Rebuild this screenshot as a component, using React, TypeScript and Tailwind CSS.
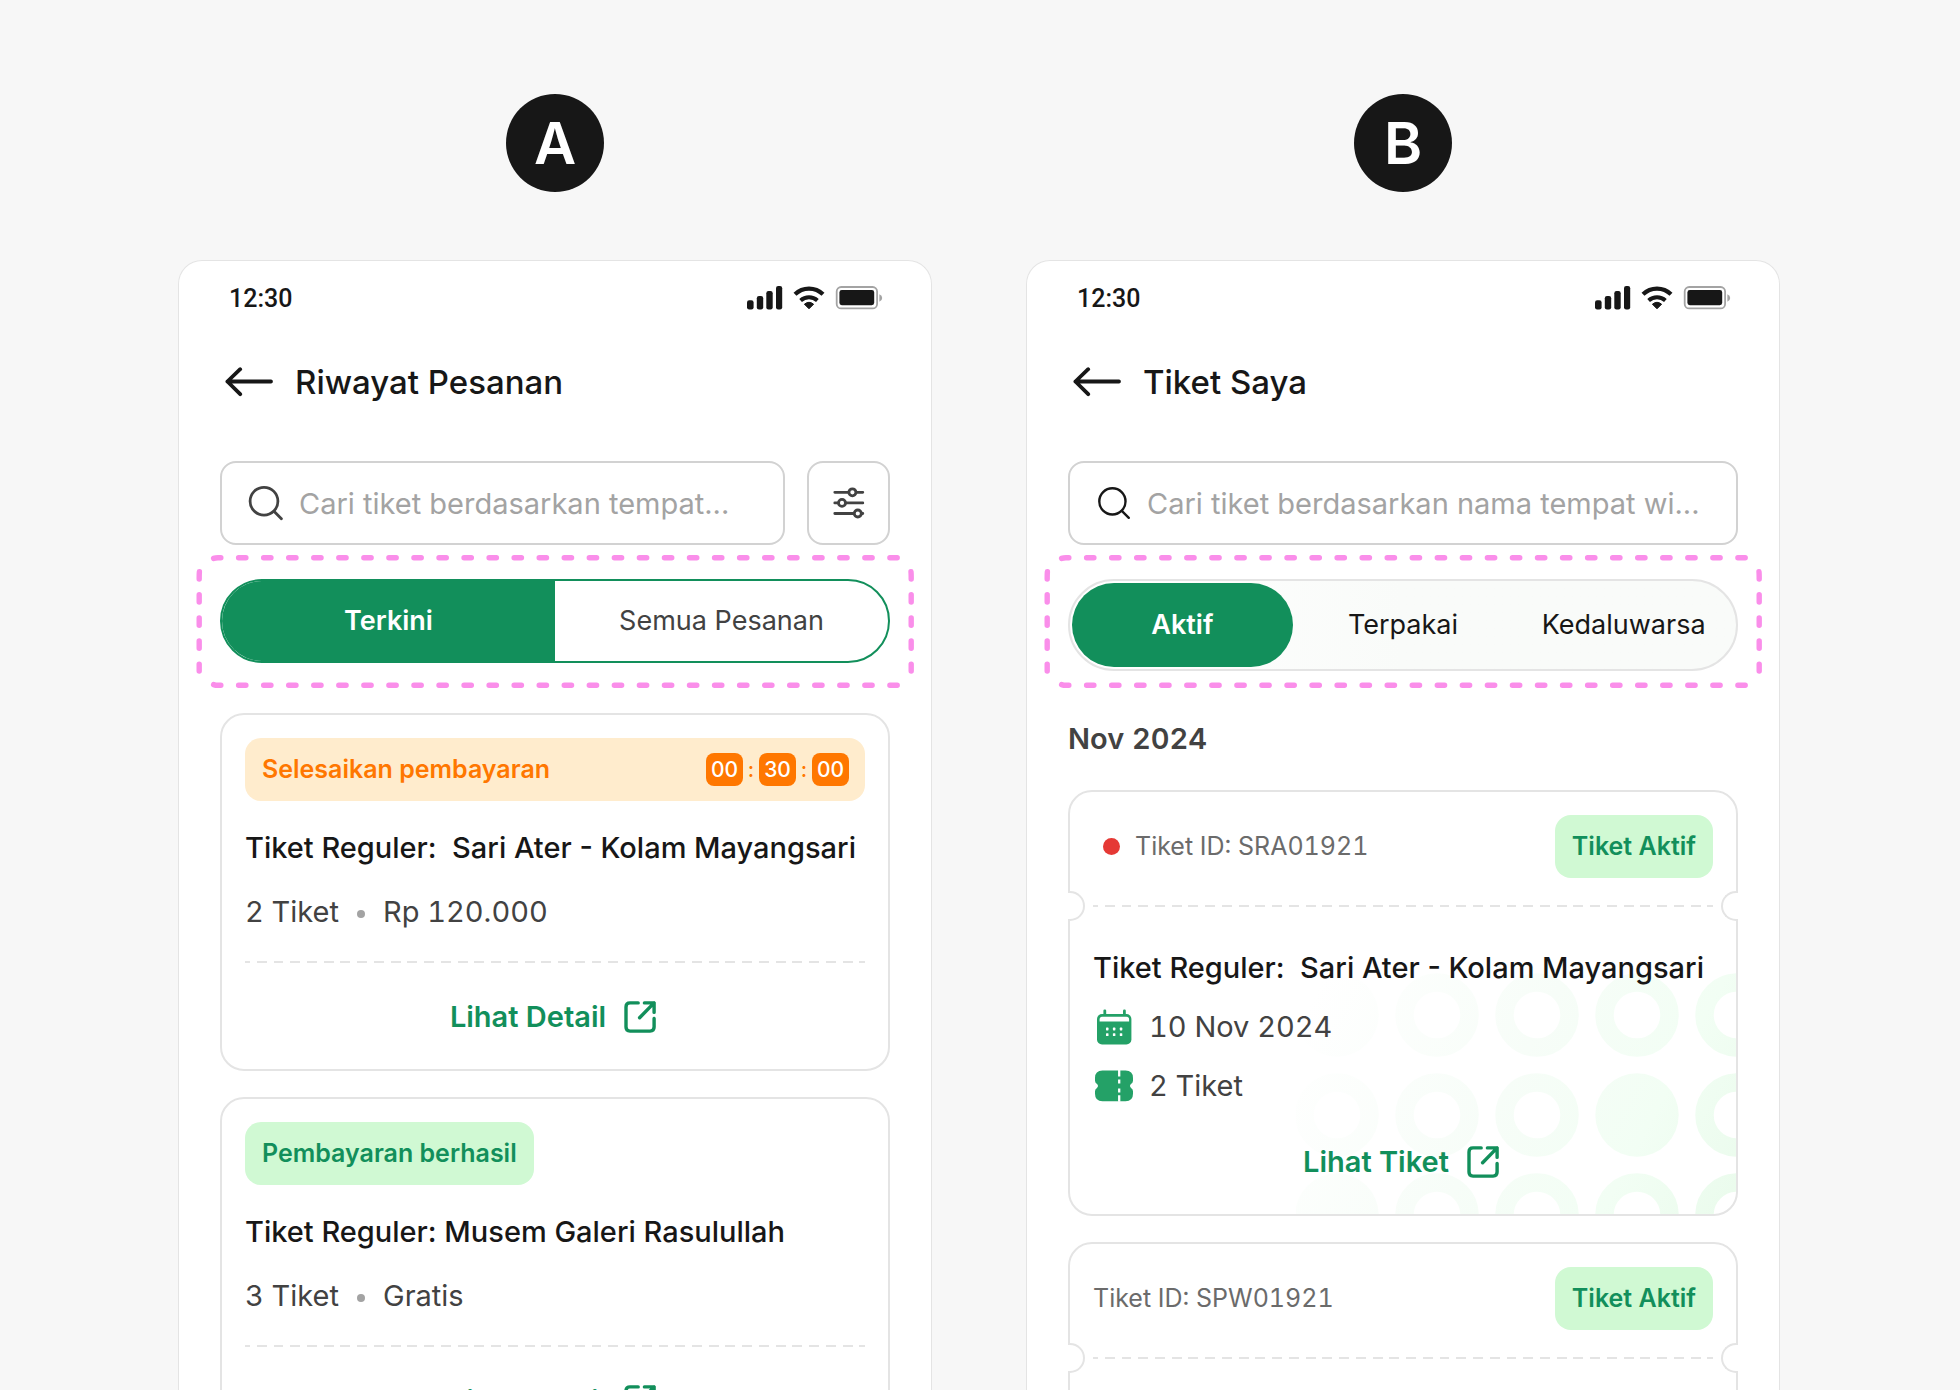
import type { ReactNode } from "react";

function StatusIcons() {
  return (
    <svg viewBox="0 0 136 24" className="h-6 w-[136px] text-[#171717]" fill="currentColor" aria-hidden="true">
      <rect x="0" y="14.2" width="6.6" height="9.3" rx="2.2" />
      <rect x="9.8" y="10" width="6.4" height="13.5" rx="2.2" />
      <rect x="19.3" y="5" width="6.4" height="18.5" rx="2.2" />
      <rect x="29" y="0" width="6.2" height="23.5" rx="2.2" />
      <g fill="none" stroke="currentColor">
        <path d="M48 8.3a20 20 0 0 1 28 0" strokeWidth="4.2" />
        <path d="M53.6 14.4a12.6 12.6 0 0 1 16.8 0" strokeWidth="4" />
      </g>
      <path d="M57.4 18.2q4.6-3.8 9.2 0L62 22.8z" stroke="currentColor" strokeWidth="1" strokeLinejoin="round" />
      <rect x="89.7" y="1" width="40.4" height="21.4" rx="4.5" fill="none" stroke="#a3a3a3" strokeWidth="1.8" />
      <rect x="92.4" y="4" width="34.8" height="15.2" rx="2.4" />
      <path d="M132.4 8.3q2.8 1 2.8 3.7t-2.8 3.7z" fill="#a3a3a3" />
    </svg>
  );
}

function BackArrow() {
  return (
    <svg viewBox="0 0 48 30" className="h-[30px] w-12" fill="none" stroke="#171717" strokeWidth="3.8" strokeLinecap="round" strokeLinejoin="round" aria-hidden="true">
      <path d="M46 14.5H2.4M15.2 2.2L2.4 14.5 15.2 27.2" />
    </svg>
  );
}

function SearchIconBold() {
  return (
    <svg viewBox="0 0 36 36" className="size-9 shrink-0" fill="none" stroke="#424242" strokeWidth="2.8" strokeLinecap="round" aria-hidden="true">
      <circle cx="17" cy="16.2" r="13.9" />
      <path d="M27.2 26.4l7.2 7.4" />
    </svg>
  );
}

function SearchIconLight() {
  return (
    <svg viewBox="0 0 36 36" className="size-9 shrink-0" fill="none" stroke="#171717" strokeWidth="2.4" strokeLinecap="round" aria-hidden="true">
      <circle cx="17.4" cy="16.4" r="13.1" />
      <path d="M26.8 25.8l7 7" />
    </svg>
  );
}

function FilterIcon() {
  return (
    <svg viewBox="0 0 32 32" className="size-8" fill="none" stroke="#424242" strokeWidth="2.8" strokeLinecap="round" aria-hidden="true">
      <path d="M1.8 5.3h28M1.8 15.9h28M1.8 26.5h28" />
      <g fill="white">
        <circle cx="19.4" cy="5.3" r="3.5" />
        <circle cx="9" cy="15.9" r="3.5" />
        <circle cx="24.8" cy="26.5" r="3.5" />
      </g>
    </svg>
  );
}

function OpenIcon() {
  return (
    <svg viewBox="0 0 32 32" className="size-8" fill="none" stroke="currentColor" strokeWidth="3.4" strokeLinecap="round" strokeLinejoin="round" aria-hidden="true">
      <path d="M14.2 1.9H6q-4 0-4 4v20.2q0 4 4 4h20.1q4 0 4-4v-8.6" />
      <path d="M20.4 1.9h9.7v9.5M30.1 1.9L15.6 16.8" />
    </svg>
  );
}

function CalendarIcon() {
  return (
    <svg viewBox="0 0 40 36" className="h-9 w-10 shrink-0" aria-hidden="true">
      <g fill="#24a167">
        <rect x="3" y="5" width="34.4" height="30.4" rx="5" />
        <rect x="9.4" y="0.5" width="2.8" height="6" rx="1.2" />
        <rect x="29" y="0.5" width="2.8" height="6" rx="1.2" />
      </g>
      <path d="M5.6 12.4v-2q0-2.7 2.7-2.7h24.1q2.7 0 2.7 2.7v2z" fill="white" />
      <g fill="white">
        <rect x="12" y="18.6" width="2.5" height="2.8" rx="0.6" />
        <rect x="18.9" y="18.6" width="2.5" height="2.8" rx="0.6" />
        <rect x="25.8" y="18.6" width="2.5" height="2.8" rx="0.6" />
        <rect x="12" y="24.2" width="2.5" height="2.8" rx="0.6" />
        <rect x="18.9" y="24.2" width="2.5" height="2.8" rx="0.6" />
        <rect x="25.8" y="24.2" width="2.5" height="2.8" rx="0.6" />
      </g>
    </svg>
  );
}

function TicketIcon() {
  return (
    <svg viewBox="0 0 40 36" className="h-9 w-10 shrink-0" aria-hidden="true">
      <path
        d="M8.5 2.5h23q7.5 0 7.5 7.5v2.6q0 2.2-1.7 3.2-2.6 2.2 0 4.4 1.7 1 1.7 3.2v2.4q0 7.5-7.5 7.5h-23q-7.5 0-7.5-7.5v-2.4q0-2.2 1.7-3.2 2.6-2.2 0-4.4Q1 14.8 1 12.6V10q0-7.5 7.5-7.5z"
        fill="#24a167"
      />
      <path d="M25.2 2v6.6M25.2 11.4v4M25.2 20.4v4M25.2 27.2v6.6" stroke="white" strokeWidth="2.3" />
    </svg>
  );
}

/** Dashed outline that calls attention to the tab control. */
function Highlight() {
  return (
    <svg
      viewBox="0 0 718 133"
      className="pointer-events-none absolute -inset-x-6 -top-6 w-[calc(100%+48px)]"
      fill="none"
      stroke="#fa8eea"
      strokeWidth="5.4"
      strokeLinecap="round"
      aria-hidden="true"
    >
      <g strokeDasharray="7.3 17.75">
        <path d="M17.6 3.4Q19.5 2.7 22 2.7H703" />
        <path d="M17.6 129.6Q19.5 130.3 22 130.3H703" />
      </g>
      <g strokeDasharray="7.3 15.8">
        <path d="M3.4 16.7Q3.2 19 3.2 22V116" />
        <path d="M715 16.7Q715.2 19 715.2 22V116" />
      </g>
    </svg>
  );
}

function DashedRule() {
  return (
    <div className="h-0.5 bg-[repeating-linear-gradient(90deg,#e4e4e4_0%_0.8%,transparent_0.8%_1.9%,#e4e4e4_1.9%_2.7%)]" />
  );
}

function RingPattern() {
  const rows = [43, 143, 243];
  const columns = [41, 141, 241, 341, 441];
  const solid = new Set(["0-0", "2-0", "1-3"]);
  return (
    <svg viewBox="0 0 440 242" className="absolute right-0 bottom-0 h-[242px] w-[440px]" aria-hidden="true">
      <defs>
        <linearGradient id="ring-fade" gradientUnits="userSpaceOnUse" x1="20" y1="20" x2="440" y2="240">
          <stop offset="0" stopColor="#ffffff" />
          <stop offset="0.45" stopColor="#f7fdf8" />
          <stop offset="0.75" stopColor="#f2fef4" />
          <stop offset="1" stopColor="#eafbec" />
        </linearGradient>
      </defs>
      <g fill="none" stroke="url(#ring-fade)" strokeWidth="18.5">
        {rows.map((y, r) =>
          columns.map((x, c) =>
            solid.has(`${r}-${c}`) ? (
              <circle key={`${r}-${c}`} cx={x} cy={y} r="41.7" fill="url(#ring-fade)" stroke="none" />
            ) : (
              <circle key={`${r}-${c}`} cx={x} cy={y} r="32.5" />
            ),
          ),
        )}
      </g>
    </svg>
  );
}

function Phone({ title, children }: { title: string; children: ReactNode }) {
  return (
    <section aria-label={title} className="w-full grow rounded-t-3xl border border-b-0 border-[#e4e4e4] bg-white px-[41px]">
      <div className="flex h-[74px] items-center justify-between pr-[7px] pl-[9px]">
        <span className="pt-0.5 font-[Roboto] text-[25px] font-medium">12:30</span>
        <StatusIcons />
      </div>
      <header className="flex h-[94px] items-center gap-[22px] pl-[5px]">
        <button type="button" aria-label="Kembali">
          <BackArrow />
        </button>
        <h1 className="text-[33px] leading-[44px] font-medium">{title}</h1>
      </header>
      {children}
    </section>
  );
}

function Column({ letter, children }: { letter: string; children: ReactNode }) {
  return (
    <div className="flex min-w-0 flex-col items-center gap-[68px]">
      <div className="flex size-[98px] shrink-0 items-center justify-center rounded-full bg-[#171717] text-[58px] leading-none font-semibold text-white">
        {letter}
      </div>
      {children}
    </div>
  );
}

function SearchBox({ placeholder, icon }: { placeholder: string; icon: ReactNode }) {
  return (
    <label className="flex h-[84px] min-w-0 grow items-center gap-4 rounded-2xl border-2 border-[#d2d2d2] pr-4 pl-[25px]">
      {icon}
      <input
        type="text"
        aria-label="Cari tiket"
        placeholder={placeholder}
        className="w-full min-w-0 bg-transparent pt-0.5 text-[29px] outline-none placeholder:text-[#a3a3a3]"
      />
    </label>
  );
}

function OpenLink({ children }: { children: ReactNode }) {
  return (
    <a href="#detail" className="flex h-11 items-center justify-center gap-[18px] pr-1 text-[29px] font-semibold text-[#128f5b]">
      {children}
      <OpenIcon />
    </a>
  );
}

function Badge({ children }: { children: ReactNode }) {
  return (
    <span className="flex h-[63px] items-center rounded-2xl bg-[#d0f9d3] px-[17px] text-[25px] font-semibold text-[#128f5b]">
      {children}
    </span>
  );
}

function TimeBox({ children }: { children: ReactNode }) {
  return (
    <span className="flex h-[33px] w-[37px] items-center justify-center rounded-lg bg-[#ff7700] text-[21px] font-medium text-white">
      {children}
    </span>
  );
}

function OrderCard({ status, title, count, price }: { status: ReactNode; title: string; count: string; price: string }) {
  return (
    <article className="rounded-3xl border-2 border-[#e4e4e4] px-[23px] pt-[23px] pb-[30px]">
      {status}
      <h2 className="mt-[25px] text-[29px] leading-[44px] font-medium whitespace-nowrap">{title}</h2>
      <p className="mt-5 flex h-11 items-center text-[29px] text-[#424242] tabular-nums">
        {count}
        <span className="mx-[18px] mt-1 size-2 rounded-full bg-[#a3a3a3]" />
        {price}
      </p>
      <div className="mt-[27px] mb-8">
        <DashedRule />
      </div>
      <OpenLink>Lihat Detail</OpenLink>
    </article>
  );
}

function TicketCard({ id, unread, pattern }: { id: string; unread?: boolean; pattern?: boolean }) {
  return (
    <article className="relative rounded-3xl border-2 border-[#e4e4e4] px-[23px] pt-[23px] pb-[30px]">
      {pattern && (
        <div className="absolute inset-0 overflow-hidden rounded-[22px]">
          <RingPattern />
        </div>
      )}
      <div className="relative flex items-center justify-between">
        <p className="flex items-center gap-[15px] text-[25px] text-[#6b6b6b] tabular-nums">
          {unread && <span className="ml-2.5 size-[17px] rounded-full bg-[#e53935]" />}
          {id}
        </p>
        <Badge>Tiket Aktif</Badge>
      </div>
      <div className="relative mt-[27px]">
        <DashedRule />
        <span className="absolute -top-3.5 -left-[25px] h-[30px] w-[17px] rounded-r-full border-2 border-l-0 border-[#e4e4e4] bg-white" />
        <span className="absolute -top-3.5 -right-[25px] h-[30px] w-[17px] rounded-l-full border-2 border-r-0 border-[#e4e4e4] bg-white" />
      </div>
      <div className="relative">
        <h3 className="mt-[39px] text-[29px] leading-[44px] font-medium whitespace-nowrap">
          {"Tiket Reguler:\u00a0 Sari Ater - Kolam Mayangsari"}
        </h3>
        <p className="mt-[15px] flex h-11 items-center gap-[15px] pl-px text-[29px] text-[#424242] tabular-nums">
          <CalendarIcon />
          10 Nov 2024
        </p>
        <p className="mt-[15px] mb-8 flex h-11 items-center gap-[15px] pl-px text-[29px] text-[#424242] tabular-nums">
          <TicketIcon />2 Tiket
        </p>
        <OpenLink>Lihat Tiket</OpenLink>
      </div>
    </article>
  );
}

export default function App() {
  return (
    <main className="grid h-screen grid-cols-2 gap-[94px] overflow-hidden bg-[#f7f7f7] pt-[94px] pr-[180px] pl-[178px] font-[Inter,sans-serif] text-[#171717]">
      <Column letter="A">
        <Phone title="Riwayat Pesanan">
          <div className="mt-8 flex gap-[22px]">
            <SearchBox placeholder="Cari tiket berdasarkan tempat..." icon={<SearchIconBold />} />
            <button
              type="button"
              aria-label="Filter"
              className="flex h-[84px] w-[83px] shrink-0 items-center justify-center rounded-2xl border-2 border-[#d2d2d2]"
            >
              <FilterIcon />
            </button>
          </div>
          <div className="relative mt-[34px]">
            <div role="tablist" className="grid h-[84px] grid-cols-2 overflow-hidden rounded-full border-2 border-[#128f5b] text-[27px]">
              <button type="button" role="tab" aria-selected="true" className="bg-[#128f5b] font-semibold text-white">
                Terkini
              </button>
              <button type="button" role="tab" aria-selected="false" className="text-[#424242]">
                Semua Pesanan
              </button>
            </div>
            <Highlight />
          </div>
          <div className="mt-[50px] flex flex-col gap-[26px]">
            <OrderCard
              status={
                <div className="flex h-[63px] items-center justify-between rounded-2xl bg-[#ffeccd] pr-4 pl-[17px] text-[25px] font-semibold text-[#ff7700]">
                  Selesaikan pembayaran
                  <div className="flex items-center text-[21px] font-medium">
                    <TimeBox>00</TimeBox>
                    <span className="w-4 text-center">:</span>
                    <TimeBox>30</TimeBox>
                    <span className="w-4 text-center">:</span>
                    <TimeBox>00</TimeBox>
                  </div>
                </div>
              }
              title={"Tiket Reguler:\u00a0 Sari Ater - Kolam Mayangsari"}
              count="2 Tiket"
              price="Rp 120.000"
            />
            <OrderCard
              status={
                <div className="flex">
                  <Badge>Pembayaran berhasil</Badge>
                </div>
              }
              title="Tiket Reguler: Musem Galeri Rasulullah"
              count="3 Tiket"
              price="Gratis"
            />
          </div>
        </Phone>
      </Column>
      <Column letter="B">
        <Phone title="Tiket Saya">
          <div className="mt-8 flex">
            <SearchBox placeholder="Cari tiket berdasarkan nama tempat wi..." icon={<SearchIconLight />} />
          </div>
          <div className="relative mt-[34px]">
            <div
              role="tablist"
              className="grid h-[92px] grid-cols-3 rounded-full border-2 border-[#e4e4e4] bg-linear-to-r from-white to-[#f9fbf9] to-50% p-0.5 text-[27px]"
            >
              <button type="button" role="tab" aria-selected="true" className="rounded-full bg-[#128f5b] font-semibold text-white">
                Aktif
              </button>
              <button type="button" role="tab" aria-selected="false">
                Terpakai
              </button>
              <button type="button" role="tab" aria-selected="false">
                Kedaluwarsa
              </button>
            </div>
            <Highlight />
          </div>
          <h2 className="mt-[46px] text-[29px] leading-[44px] font-semibold text-[#424242] tabular-nums">Nov 2024</h2>
          <div className="mt-[29px] flex flex-col gap-[26px]">
            <TicketCard id="Tiket ID: SRA01921" unread pattern />
            <TicketCard id="Tiket ID: SPW01921" />
          </div>
        </Phone>
      </Column>
    </main>
  );
}
